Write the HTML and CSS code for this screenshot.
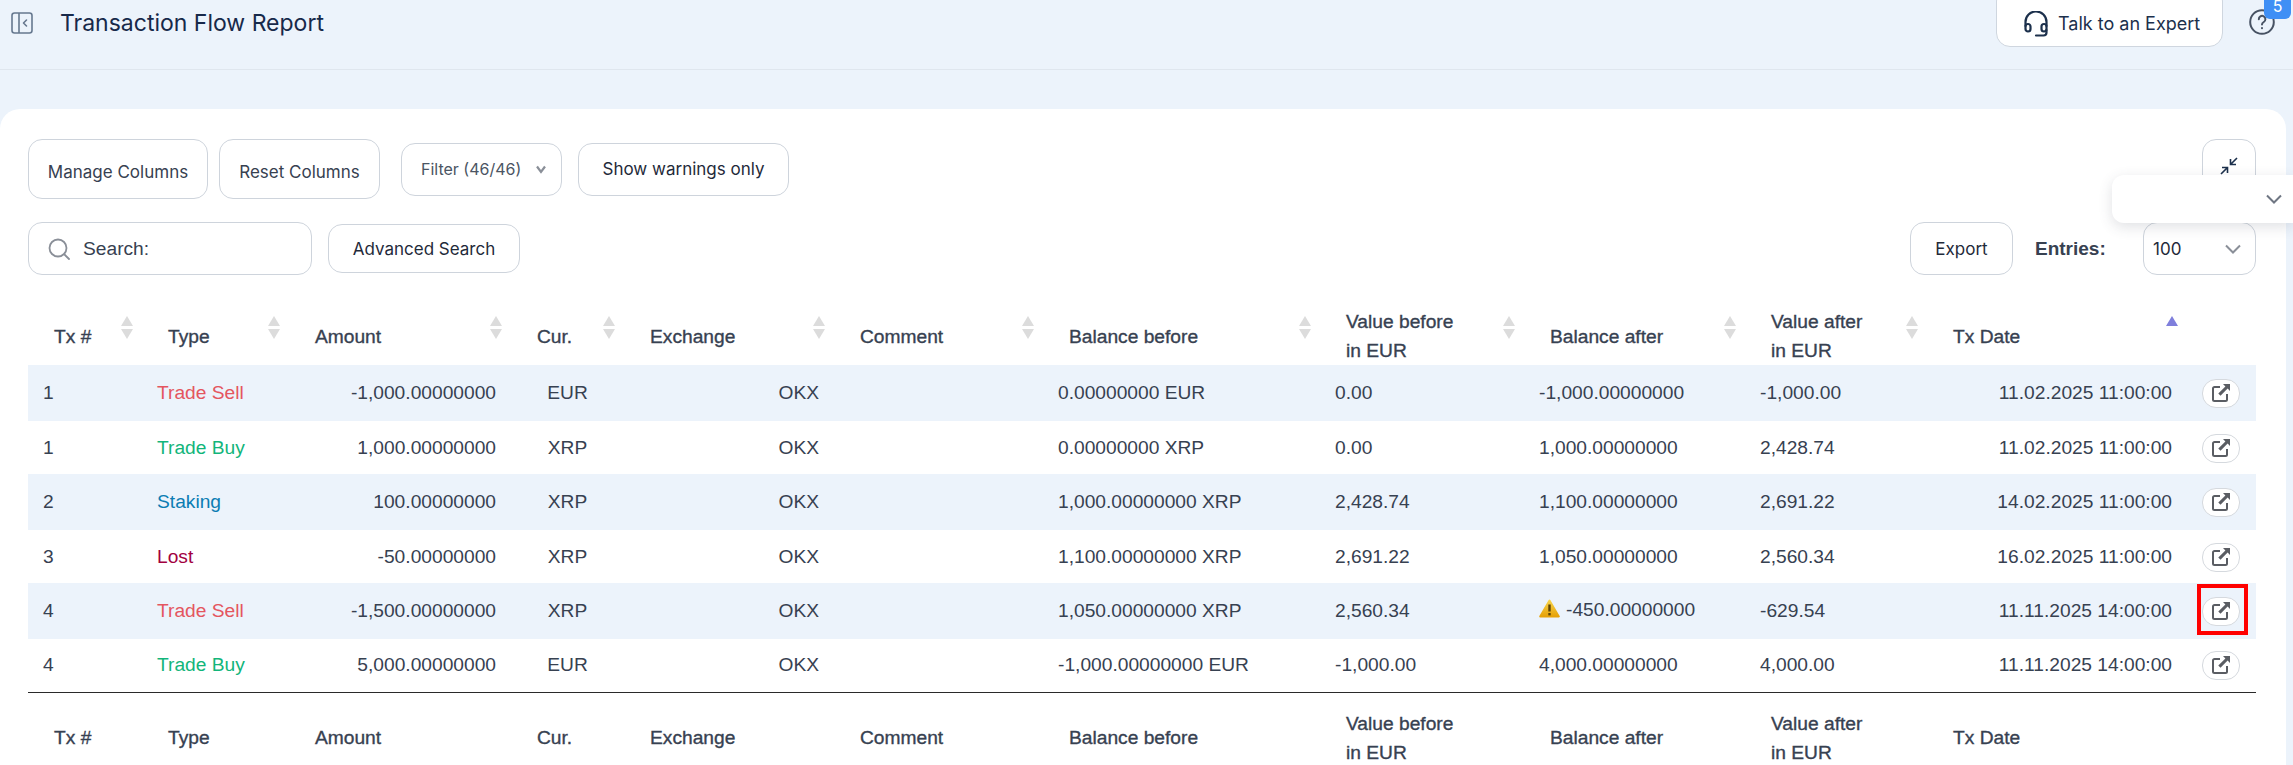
FILE: index.html
```html
<!DOCTYPE html>
<html lang="en">
<head>
<meta charset="utf-8">
<title>Transaction Flow Report</title>
<link rel="stylesheet" href="styles.css">
</head>
<body>
<div class="app">
  <header class="topbar">
    <div class="topbar-left">
      <svg class="toggle-icon" width="22" height="22" viewBox="0 0 22 22" fill="none" stroke="#66788f" stroke-width="1.6"><rect x="1" y="1" width="20" height="20" rx="2.5"/><path d="M8 1v20"/><path d="M15.5 8l-3 3 3 3" stroke-linecap="round" stroke-linejoin="round"/></svg>
      <h1 class="title">Transaction Flow Report</h1>
    </div>
    <div class="topbar-right">
      <button class="talk-btn">
        <svg width="24" height="26" viewBox="0 0 24 26" fill="none" stroke="#1c304c" stroke-width="2.2" stroke-linecap="round"><path d="M1.5 15V11a10.5 10.5 0 0 1 21 0v4"/><rect x="1.5" y="13" width="5" height="7.5" rx="2.5"/><rect x="17.5" y="13" width="5" height="7.5" rx="2.5"/><path d="M22.5 19v2.5a3 3 0 0 1-3 3H12"/></svg>
        <span>Talk to an Expert</span>
      </button>
      <div class="help">
        <svg width="26" height="26" viewBox="0 0 26 26" fill="none" stroke="#475263" stroke-width="2" stroke-linecap="round"><circle cx="13" cy="13" r="11.8"/><path d="M9.8 10.2a3.3 3.3 0 1 1 5 2.8c-1.1.7-1.8 1.4-1.8 2.6"/><path d="M13 19v.3"/></svg>
        <span class="badge">5</span>
      </div>
    </div>
  </header>

  <main class="panel">
    <div class="toolbar toolbar-top">
      <button class="btn btn-tall">Manage Columns</button>
      <button class="btn btn-tall btn-reset">Reset Columns</button>
      <button class="btn btn-filter">Filter (46/46)
        <svg width="10" height="9" viewBox="0 0 10 9" fill="none" stroke="#8a8f98" stroke-width="2.2"><path d="M1 1.500L5 7l4-5.500"/></svg>
      </button>
      <button class="btn btn-warn">Show warnings only</button>
      <button class="btn btn-collapse" aria-label="Collapse">
        <svg width="20" height="20" viewBox="0 0 20 20" fill="none" stroke="#1c304c" stroke-width="1.6"><path d="M18 2l-6.500 6.500M11.500 3v5.500H17"/><path d="M2 18l6.500-6.500M8.500 17v-5.500H3"/></svg>
      </button>
    </div>

    <div class="toolbar toolbar-search">
      <label class="search">
        <svg width="22" height="22" viewBox="0 0 22 22" fill="none" stroke="#8a8f98" stroke-width="1.8" stroke-linecap="round"><circle cx="10" cy="10" r="8.500"/><path d="M16.500 16.500l4.500 4.500"/></svg>
        <span>Search:</span>
      </label>
      <button class="btn btn-advanced">Advanced Search</button>
      <button class="btn btn-export">Export</button>
      <span class="entries-label">Entries:</span>
      <div class="entries-select">
        <span>100</span>
        <svg width="16" height="10" viewBox="0 0 16 10" fill="none" stroke="#8a8f98" stroke-width="2"><path d="M1 1.500l7 7 7-7"/></svg>
      </div>
    </div>

    <div class="floating-select">
      <svg width="16" height="10" viewBox="0 0 16 10" fill="none" stroke="#6f7683" stroke-width="2"><path d="M1 1.500l7 7 7-7"/></svg>
    </div>

    <table class="report">
      <colgroup>
        <col class="c1"><col class="c2"><col class="c3"><col class="c4"><col class="c5"><col class="c6"><col class="c7"><col class="c8"><col class="c9"><col class="c10"><col class="c11"><col class="c12">
      </colgroup>
      <thead>
        <tr>
          <th class="sort">Tx #</th>
          <th class="sort">Type</th>
          <th class="sort">Amount</th>
          <th class="sort">Cur.</th>
          <th class="sort">Exchange</th>
          <th class="sort">Comment</th>
          <th class="sort">Balance before</th>
          <th class="sort">Value before<br>in EUR</th>
          <th class="sort">Balance after</th>
          <th class="sort">Value after<br>in EUR</th>
          <th class="sort-active">Tx Date</th>
          <th></th>
        </tr>
      </thead>
      <tbody>
        <tr>
          <td>1</td><td class="sell">Trade Sell</td><td class="right">-1,000.00000000</td><td class="center">EUR</td><td class="right">OKX</td><td></td><td>0.00000000 EUR</td><td>0.00</td><td>-1,000.00000000</td><td>-1,000.00</td><td class="right">11.02.2025 11:00:00</td>
          <td class="action"><button class="open-btn" aria-label="Open"><svg class="open-icon" width="18" height="18" viewBox="0 0 18 18"><path d="M8 3H2.500A1.500 1.500 0 0 0 1 4.500v11A1.500 1.500 0 0 0 2.500 17h11a1.500 1.500 0 0 0 1.500-1.500V10" fill="none" stroke="#5a5d63" stroke-width="2"/><path d="M11 0h7v7l-2.400-2.400L8.500 11.700 6.300 9.500l7.100-7.100z" fill="#5a5d63"/></svg></button></td>
        </tr>
        <tr>
          <td>1</td><td class="buy">Trade Buy</td><td class="right">1,000.00000000</td><td class="center">XRP</td><td class="right">OKX</td><td></td><td>0.00000000 XRP</td><td>0.00</td><td>1,000.00000000</td><td>2,428.74</td><td class="right">11.02.2025 11:00:00</td>
          <td class="action"><button class="open-btn" aria-label="Open"><svg class="open-icon" width="18" height="18" viewBox="0 0 18 18"><path d="M8 3H2.500A1.500 1.500 0 0 0 1 4.500v11A1.500 1.500 0 0 0 2.500 17h11a1.500 1.500 0 0 0 1.500-1.500V10" fill="none" stroke="#5a5d63" stroke-width="2"/><path d="M11 0h7v7l-2.400-2.400L8.500 11.700 6.300 9.500l7.100-7.100z" fill="#5a5d63"/></svg></button></td>
        </tr>
        <tr>
          <td>2</td><td class="staking">Staking</td><td class="right">100.00000000</td><td class="center">XRP</td><td class="right">OKX</td><td></td><td>1,000.00000000 XRP</td><td>2,428.74</td><td>1,100.00000000</td><td>2,691.22</td><td class="right">14.02.2025 11:00:00</td>
          <td class="action"><button class="open-btn" aria-label="Open"><svg class="open-icon" width="18" height="18" viewBox="0 0 18 18"><path d="M8 3H2.500A1.500 1.500 0 0 0 1 4.500v11A1.500 1.500 0 0 0 2.500 17h11a1.500 1.500 0 0 0 1.500-1.500V10" fill="none" stroke="#5a5d63" stroke-width="2"/><path d="M11 0h7v7l-2.400-2.400L8.500 11.700 6.300 9.500l7.100-7.100z" fill="#5a5d63"/></svg></button></td>
        </tr>
        <tr>
          <td>3</td><td class="lost">Lost</td><td class="right">-50.00000000</td><td class="center">XRP</td><td class="right">OKX</td><td></td><td>1,100.00000000 XRP</td><td>2,691.22</td><td>1,050.00000000</td><td>2,560.34</td><td class="right">16.02.2025 11:00:00</td>
          <td class="action"><button class="open-btn" aria-label="Open"><svg class="open-icon" width="18" height="18" viewBox="0 0 18 18"><path d="M8 3H2.500A1.500 1.500 0 0 0 1 4.500v11A1.500 1.500 0 0 0 2.500 17h11a1.500 1.500 0 0 0 1.500-1.500V10" fill="none" stroke="#5a5d63" stroke-width="2"/><path d="M11 0h7v7l-2.400-2.400L8.500 11.700 6.300 9.500l7.100-7.100z" fill="#5a5d63"/></svg></button></td>
        </tr>
        <tr>
          <td>4</td><td class="sell">Trade Sell</td><td class="right">-1,500.00000000</td><td class="center">XRP</td><td class="right">OKX</td><td></td><td>1,050.00000000 XRP</td><td>2,560.34</td>
          <td><span class="warn-cell"><svg width="21" height="19" viewBox="0 0 21 19"><defs><linearGradient id="warnfill" x1="0" y1="0" x2="0" y2="1"><stop offset="0" stop-color="#f7d34a"/><stop offset="1" stop-color="#e6a209"/></linearGradient></defs><path d="M10.500 1.500L19.800 17.500H1.200z" fill="url(#warnfill)" stroke="url(#warnfill)" stroke-width="2" stroke-linejoin="round"/><path d="M10.500 5.500v7" stroke="#5b4306" stroke-width="2.400"/><path d="M10.500 14v2.400" stroke="#5b4306" stroke-width="2.400"/></svg>-450.00000000</span></td>
          <td>-629.54</td><td class="right">11.11.2025 14:00:00</td>
          <td class="action marked"><button class="open-btn" aria-label="Open"><svg class="open-icon" width="18" height="18" viewBox="0 0 18 18"><path d="M8 3H2.500A1.500 1.500 0 0 0 1 4.500v11A1.500 1.500 0 0 0 2.500 17h11a1.500 1.500 0 0 0 1.500-1.500V10" fill="none" stroke="#5a5d63" stroke-width="2"/><path d="M11 0h7v7l-2.400-2.400L8.500 11.700 6.300 9.500l7.100-7.100z" fill="#5a5d63"/></svg></button><span class="highlight"></span></td>
        </tr>
        <tr>
          <td>4</td><td class="buy">Trade Buy</td><td class="right">5,000.00000000</td><td class="center">EUR</td><td class="right">OKX</td><td></td><td>-1,000.00000000 EUR</td><td>-1,000.00</td><td>4,000.00000000</td><td>4,000.00</td><td class="right">11.11.2025 14:00:00</td>
          <td class="action"><button class="open-btn" aria-label="Open"><svg class="open-icon" width="18" height="18" viewBox="0 0 18 18"><path d="M8 3H2.500A1.500 1.500 0 0 0 1 4.500v11A1.500 1.500 0 0 0 2.500 17h11a1.500 1.500 0 0 0 1.500-1.500V10" fill="none" stroke="#5a5d63" stroke-width="2"/><path d="M11 0h7v7l-2.400-2.400L8.500 11.700 6.300 9.500l7.100-7.100z" fill="#5a5d63"/></svg></button></td>
        </tr>
      </tbody>
      <tfoot>
        <tr>
          <th>Tx #</th><th>Type</th><th>Amount</th><th>Cur.</th><th>Exchange</th><th>Comment</th><th>Balance before</th><th>Value before<br>in EUR</th><th>Balance after</th><th>Value after<br>in EUR</th><th>Tx Date</th><th></th>
        </tr>
      </tfoot>
    </table>
  </main>
</div>
</body>
</html>
```

FILE: styles.css
```css
* { box-sizing: border-box; }

html, body {
  margin: 0;
  height: 765px;
  overflow: hidden;
}

body {
  background: #ecf3fb;
  font-family: Inter, "Liberation Sans", sans-serif;
  color: #374151;
  font-size: 17px;
}

button {
  font: inherit;
  color: inherit;
  background: #fff;
  cursor: pointer;
}

.app {
  height: 765px;
  overflow: hidden;
}

/* Top bar */
.topbar {
  height: 70px;
  border-bottom: 1px solid #dfe6ee;
  display: flex;
  justify-content: space-between;
  padding: 0 1px 23px 11px;
}

.topbar-left {
  display: flex;
  align-items: center;
  gap: 27px;
  height: 46px;
}

.title {
  margin: 0;
  font-size: 23px;
  font-weight: 400;
  color: #17294a;
}

.topbar-right {
  display: flex;
  align-items: flex-start;
}

.talk-btn {
  height: 60px;
  width: 227px;
  margin-top: -13px;
  display: flex;
  align-items: center;
  gap: 10px;
  padding: 13px 0 0 27px;
  border: 1px solid #cfd6df;
  border-radius: 14px;
  color: #1c304c;
  font-size: 18px;
}

.help {
  position: relative;
  width: 69px;
  height: 46px;
}

.help > svg {
  position: absolute;
  left: 26px;
  top: 9px;
}

.badge {
  position: absolute;
  left: 41px;
  top: -9px;
  width: 27px;
  height: 28px;
  background: #3f8ff5;
  color: #fff;
  border-radius: 0 0 6px 6px;
  font-size: 16px;
  line-height: 30px;
  text-align: center;
}

/* Panel */
.panel {
  position: relative;
  margin: 39px 7px 0 0;
  height: 660px;
  background: #fff;
  border-radius: 20px 20px 0 0;
  padding: 30px 30px 0 28px;
}

.toolbar {
  display: flex;
  align-items: center;
}

.toolbar-top {
  height: 60px;
}

.toolbar-search {
  height: 53px;
  margin-top: 23px;
}

.btn {
  border: 1px solid #ced4dc;
  border-radius: 14px;
  padding: 0;
  white-space: nowrap;
  display: flex;
  align-items: center;
  justify-content: center;
  height: 53px;
}

.btn-tall {
  height: 60px;
  width: 180px;
  padding-top: 6px;
  margin-right: 11px;
}

.btn-reset {
  width: 161px;
  margin-right: 21px;
}

.btn-filter {
  width: 161px;
  margin-right: 16px;
  justify-content: flex-start;
  padding-left: 19px;
  gap: 15px;
  color: #4b5563;
  font-size: 16px;
}

.btn-warn {
  width: 211px;
  color: #1f2a3a;
}

.btn-collapse {
  width: 54px;
  height: 54px;
  margin-left: auto;
  margin-bottom: 6px;
}

.search {
  width: 284px;
  height: 53px;
  border: 1px solid #ced4dc;
  border-radius: 14px;
  display: flex;
  align-items: center;
  gap: 13px;
  padding-left: 19px;
  margin-right: 16px;
  font-family: "Liberation Sans", Arial, sans-serif;
  font-size: 19.2px;
}

.btn-advanced {
  width: 192px;
  height: 49px;
  color: #1f2a3a;
}

.btn-export {
  width: 103px;
  margin-left: auto;
  margin-right: 22px;
  color: #1f2a3a;
}

.entries-label {
  width: 108px;
  font-family: "Liberation Sans", Arial, sans-serif;
  font-size: 19px;
  font-weight: 700;
}

.entries-select {
  width: 113px;
  height: 53px;
  border: 1px solid #ced4dc;
  border-radius: 14px;
  display: flex;
  align-items: center;
  justify-content: space-between;
  padding: 0 14px 0 9px;
  color: #1f2a3a;
}

.floating-select {
  position: absolute;
  right: -7px;
  top: 66px;
  width: 181px;
  height: 48px;
  background: #fff;
  border-radius: 12px 0 0 12px;
  box-shadow: 0 4px 14px rgba(60, 70, 90, 0.16);
  display: flex;
  align-items: center;
  justify-content: flex-end;
  padding-right: 11px;
}

/* Table */
.report {
  width: 2228px;
  margin-top: 31px;
  table-layout: fixed;
  border-collapse: collapse;
  font-family: "Liberation Sans", Arial, sans-serif;
  font-size: 19.2px;
}

.c1 { width: 114px; }
.c2 { width: 147px; }
.c3 { width: 222px; }
.c4 { width: 113px; }
.c5 { width: 210px; }
.c6 { width: 209px; }
.c7 { width: 277px; }
.c8 { width: 204px; }
.c9 { width: 221px; }
.c10 { width: 182px; }
.c11 { width: 260px; }
.c12 { width: 69px; }

.report th {
  text-align: left;
  font-weight: 400;
  -webkit-text-stroke: 0.35px #374151;
  line-height: 29px;
  padding: 1px 0 0 26px;
  position: relative;
  white-space: nowrap;
}

.report thead th { height: 58px; }
.report tfoot th {
  height: 90px;
  border-top: 1px solid #2a2a2a;
  padding-top: 1px;
}

.report td {
  padding: 0 15px;
  white-space: nowrap;
}

.report tbody tr:nth-child(odd) td {
  height: 56px;
  background: #ecf3fb;
}

.report tbody tr:nth-child(even) td {
  height: 53px;
}

.right { text-align: right; }
.center { text-align: center; }

.sell { color: #e4565f; }
.buy { color: #12b57a; }
.staking { color: #0b7db3; }
.lost { color: #a2003f; }

.sort::before,
.sort::after,
.sort-active::before {
  content: "";
  position: absolute;
  right: 9px;
  width: 0;
  height: 0;
  border-left: 6px solid transparent;
  border-right: 6px solid transparent;
}

.sort::before {
  top: 10px;
  border-bottom: 10px solid #dcdcdc;
}

.sort::after {
  top: 23px;
  border-top: 10px solid #dcdcdc;
}

.sort-active::before {
  top: 10px;
  right: 9px;
  border-bottom: 10px solid #7f7fdc;
}

.warn-cell {
  display: inline-flex;
  align-items: center;
  gap: 6px;
}

.warn-cell svg {
  margin-top: -4px;
}

.action {
  position: relative;
  text-align: center;
}

.report td.action { padding: 1px 2px 0 0; }

.open-btn {
  width: 38px;
  height: 29px;
  border: 1px solid #d5d9de;
  border-radius: 14px;
  padding: 0 0 5px;
  display: inline-flex;
  align-items: flex-end;
  justify-content: center;
  vertical-align: middle;
}

.highlight {
  position: absolute;
  left: 10px;
  top: 1px;
  width: 51px;
  height: 51px;
  border: 4px solid #f00;
}
```
